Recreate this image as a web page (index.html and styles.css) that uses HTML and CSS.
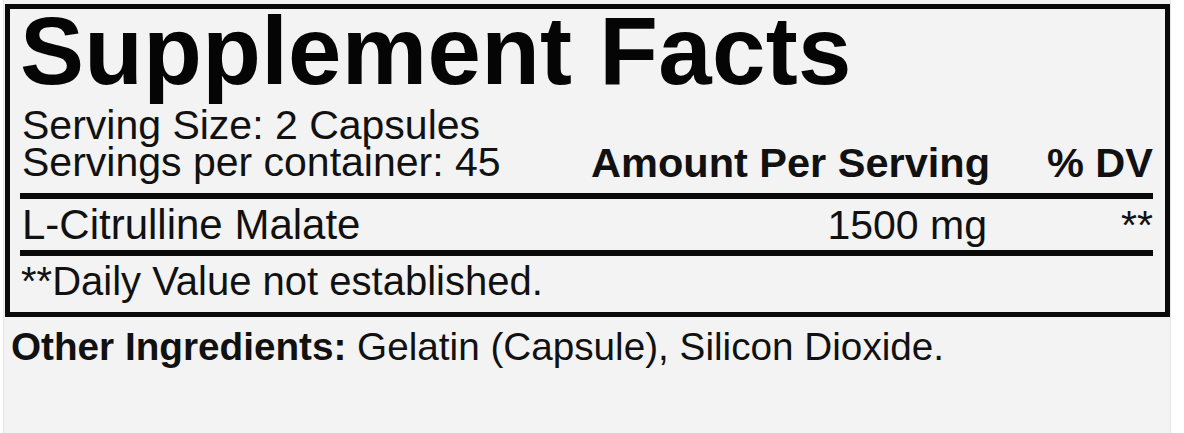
FILE: index.html
```html
<!DOCTYPE html>
<html lang="en">
<head>
<meta charset="utf-8">
<title>Supplement Facts</title>
<link rel="stylesheet" href="styles.css">
</head>
<body>
<div class="panel">
  <div class="facts">
    <h1 class="title">Supplement Facts</h1>
    <div class="head-row">
      <div class="serving">
        <div>Serving Size: 2 Capsules</div>
        <div>Servings per container: 45</div>
      </div>
      <div class="col-amount bold">Amount Per Serving</div>
      <div class="col-dv bold">% DV</div>
    </div>
    <div class="rule"></div>
    <div class="item-row">
      <div class="name">L-Citrulline Malate</div>
      <div class="col-amount">1500 mg</div>
      <div class="col-dv">**</div>
    </div>
    <div class="rule"></div>
    <div class="footnote">**Daily Value not established.</div>
  </div>
  <p class="other"><b>Other Ingredients:</b> Gelatin (Capsule), Silicon Dioxide.</p>
</div>
</body>
</html>
```

FILE: styles.css
```css
html, body {
  margin: 0;
  padding: 0;
  background: #ffffff;
}
body {
  font-family: "Liberation Sans", Arial, Helvetica, sans-serif;
  color: #111;
}
.panel {
  margin-left: 3px;
  width: 1168px;
  height: 433px;
  background: #f3f3f3;
  border-left: 1px solid #e4e4e4;
  border-right: 1px solid #e4e4e4;
  box-sizing: border-box;
  padding-top: 4px;
  overflow: hidden;
}
.facts {
  margin-left: 1px;
  width: 1165px;
  box-sizing: border-box;
  border: 5px solid #0a0a0a;
  padding: 0 12px 0 10px;
}
.title {
  margin: -6px 0 8px 0;
  font-size: 96px;
  line-height: 96px;
  font-weight: bold;
  letter-spacing: 0.3px;
  color: #050505;
}
.head-row, .item-row {
  display: grid;
  grid-template-columns: 1fr 420px 163px;
  align-items: end;
  font-size: 42px;
}
.serving {
  font-size: 41px;
  line-height: 37px;
  padding-left: 2px;
}
.bold {
  font-weight: bold;
  font-size: 41.5px;
  line-height: 37px;
}
.col-amount {
  text-align: right;
}
.col-dv {
  text-align: right;
}
.rule {
  height: 6px;
  background: #0a0a0a;
  margin-top: 12px;
}
.item-row + .rule {
  margin-top: 0;
}
.item-row {
  line-height: 50px;
  padding-top: 1px;
}
.item-row .col-amount {
  padding-right: 3px;
  font-size: 41px;
}
.item-row .col-dv {
  font-size: 41px;
}
.name {
  padding-left: 2px;
}
.footnote {
  font-size: 40px;
  line-height: 50px;
  padding-bottom: 6px;
  padding-left: 1px;
}
.other {
  margin: 9px 0 0 0;
  padding-left: 7px;
  font-size: 38.7px;
  line-height: 42px;
}
.other b {
  font-weight: bold;
}
```
